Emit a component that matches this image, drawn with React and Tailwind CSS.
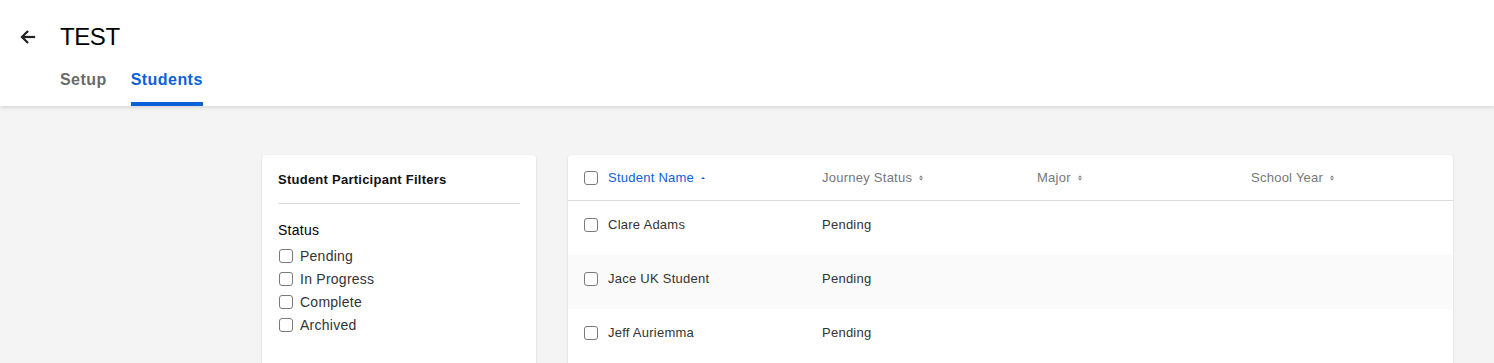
import React from 'react';

const SortIcon = ({ active }) => (
    <svg width="8" height="8" viewBox="0 0 8 8" className="ml-[5px]">
        {active ? (
            <path d="M2 5 L4 3 L6 5 Z" fill="#0b61d9" />
        ) : (
            <>
                <path d="M2 3.5 L4 1.5 L6 3.5 Z" fill="#7a7a7a" />
                <path d="M2 4.5 L4 6.5 L6 4.5 Z" fill="#7a7a7a" />
            </>
        )}
    </svg>
);

const Box = () => (
    <span className="w-[14px] h-[14px] rounded-[3px] border border-[#7a7a7a] bg-white shrink-0" />
);

const students = [
    { name: 'Clare Adams', status: 'Pending' },
    { name: 'Jace UK Student', status: 'Pending' },
    { name: 'Jeff Auriemma', status: 'Pending' },
];

const columns = [
    { label: 'Journey Status', w: 'w-[215px]' },
    { label: 'Major', w: 'w-[214px]' },
    { label: 'School Year', w: 'w-[200px]' },
];

export default function App() {
    return (
        <div className="w-[1494px] h-[363px] overflow-hidden bg-[#f4f4f4] font-['Liberation_Sans',Arial,sans-serif]">
            {/* --- Header --- */}
            <div className="bg-white h-[106px] shadow-[0_1px_5px_rgba(0,0,0,0.15)] relative z-10">
                <div className="flex items-center pt-[24px] h-[50px]">
                    <svg width="18" height="18" viewBox="0 0 24 24" className="ml-[19px]" fill="none" stroke="#222" strokeWidth="3" strokeLinecap="square">
                        <path d="M20 12H5" />
                        <path d="M11 5l-7 7 7 7" />
                    </svg>
                    <h1 className="ml-[23px] text-[24px] leading-none text-black tracking-[-0.4px]">TEST</h1>
                </div>
                <div className="flex ml-[60px] mt-[18px] gap-[24px] text-[16px] font-bold tracking-[0.45px]">
                    <div className="text-[#6b6b6b] h-[38px]">Setup</div>
                    <div className="text-[#0b61d9] h-[38px] border-b-[4px] border-[#0b61d9]">Students</div>
                </div>
            </div>

            {/* --- Content --- */}
            <div className="flex pt-[49px] pl-[262px] gap-[32px] tracking-[0.25px]">
                <div className="w-[274px] h-[260px] bg-white rounded-[4px] shadow-[0_1px_3px_rgba(0,0,0,0.12)] px-[16px] pt-[16px]">
                    <div className="text-[13px] font-bold text-[#111] leading-[18px] pb-[14px] border-b border-[#dcdcdc]">Student Participant Filters</div>
                    <div className="text-[14px] font-medium text-black leading-[20px] mt-[16px] mb-[7px]">Status</div>
                    <div className="flex flex-col gap-[5px]">
                        {['Pending', 'In Progress', 'Complete', 'Archived'].map((s) => (
                            <label key={s} className="flex items-center gap-[7px] h-[18px] pl-[1px] text-[14px] text-[#333]">
                                <Box />
                                {s}
                            </label>
                        ))}
                    </div>
                </div>

                <div className="w-[885px] h-[260px] bg-white rounded-[4px] shadow-[0_1px_3px_rgba(0,0,0,0.12)]">
                    <div className="flex items-center h-[46px] border-b border-[#dcdcdc] pl-[16px] text-[13px]">
                        <Box />
                        <div className="w-[214px] ml-[10px] flex items-center">
                            <span className="text-[#0b61d9]">Student Name</span>
                            <SortIcon active />
                        </div>
                        {columns.map((c) => (
                            <div key={c.label} className={`${c.w} flex items-center`}>
                                <span className="text-[#777]">{c.label}</span>
                                <SortIcon />
                            </div>
                        ))}
                    </div>
                    {students.map((s, i) => (
                        <div key={s.name} className={`h-[54px] pl-[16px] pt-[15px] text-[13px] text-[#333] ${i === 1 ? 'bg-[#fafafa]' : ''}`}>
                            <div className="flex items-center h-[18px]">
                                <Box />
                                <div className="w-[214px] ml-[10px]">{s.name}</div>
                                <div>{s.status}</div>
                            </div>
                        </div>
                    ))}
                </div>
            </div>
        </div>
    );
}
